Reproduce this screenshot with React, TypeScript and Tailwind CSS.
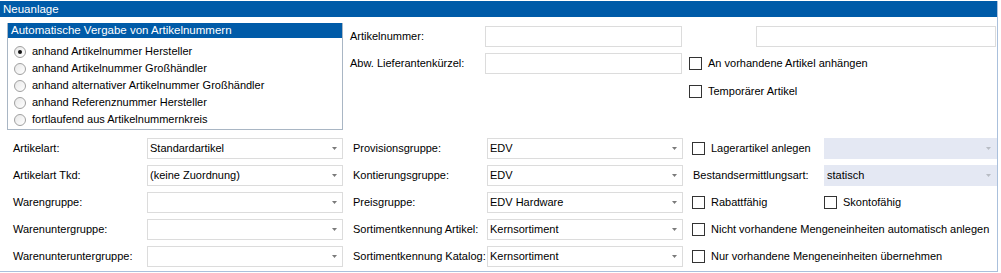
import React from "react";

const font = { fontFamily: '"Liberation Sans", Arial, sans-serif' };

function Combo({ value = "", width, disabled = false }: { value?: string; width: string; disabled?: boolean }) {
  return (
    <div
      className={`${width} h-[21px] flex items-center justify-between border pl-[2px] pr-[5px] ${
        disabled ? "bg-[#e4e8f3] border-[#e4e8f3]" : "bg-white border-[#dcdcdc]"
      }`}
    >
      <span className="leading-none">{value}</span>
      <svg width="5" height="3" viewBox="0 0 5 3">
        <polygon points="0,0 5,0 2.5,3" fill={disabled ? "#b8bcc4" : "#7a7a7a"} />
      </svg>
    </div>
  );
}

function Check({ label, className = "" }: { label: string; className?: string }) {
  return (
    <div className={`flex items-center ${className}`}>
      <div className="w-[13px] h-[13px] border border-[#333] bg-white shrink-0" />
      <span className="ml-[6px] leading-none">{label}</span>
    </div>
  );
}

function Radio({ label, checked = false }: { label: string; checked?: boolean }) {
  return (
    <div className="flex items-center h-[17px]">
      <div className="w-[12px] h-[12px] rounded-full border border-[#a0a0a0] bg-gradient-to-br from-[#e8e8e8] to-white flex items-center justify-center ml-[6px]">
        {checked && <div className="w-[4px] h-[4px] rounded-full bg-[#111]" />}
      </div>
      <span className="ml-[6px] leading-none">{label}</span>
    </div>
  );
}

function Input({ width }: { width: string }) {
  return <div className={`${width} h-[21px] border border-[#dcdcdc] bg-white`} />;
}

export default function App() {
  return (
    <div className="w-[1001px] h-[273px] bg-white text-[11px] text-black" style={font}>
      <div className="w-[998px] h-[271px] border-r border-b border-[#aac0dc]">
        <div className="mt-[1px] h-[16px] bg-[#005ba8] text-white text-[11.5px] leading-[16px] pl-[3px]">Neuanlage</div>

        <div className="flex mt-[6px]">
          <div className="ml-[7px] w-[336px] h-[107px] border border-[#a9b6c4] border-t-0">
            <div className="h-[15px] bg-[#005ba8] text-white text-[11.5px] leading-[15px] pl-[3px]">
              Automatische Vergabe von Artikelnummern
            </div>
            <div className="pt-[5px]">
              <Radio label="anhand Artikelnummer Hersteller" checked />
              <Radio label="anhand Artikelnummer Großhändler" />
              <Radio label="anhand alternativer Artikelnummer Großhändler" />
              <Radio label="anhand Referenznummer Hersteller" />
              <Radio label="fortlaufend aus Artikelnummernkreis" />
            </div>
          </div>

          <div className="ml-[7px] pt-[3px] flex flex-col">
            <div className="flex items-center h-[21px]">
              <span className="w-[135px]">Artikelnummer:</span>
              <Input width="w-[197px]" />
              <Input width="w-[240px] ml-[74px]" />
            </div>
            <div className="flex items-center h-[21px] mt-[6px]">
              <span className="w-[135px]">Abw. Lieferantenkürzel:</span>
              <Input width="w-[197px]" />
              <Check label="An vorhandene Artikel anhängen" className="ml-[7px]" />
            </div>
            <div className="flex items-center h-[20px] mt-[7px]">
              <Check label="Temporärer Artikel" className="ml-[339px]" />
            </div>
          </div>
        </div>

        <div className="flex flex-col gap-[6px] mt-[8px]">
          <div className="flex items-center h-[21px]">
            <span className="w-[147px] pl-[13px]">Artikelart:</span>
            <Combo value="Standardartikel" width="w-[196px]" />
            <span className="w-[144px] pl-[10px]">Provisionsgruppe:</span>
            <Combo value="EDV" width="w-[196px]" />
            <Check label="Lagerartikel anlegen" className="ml-[9px] w-[132px]" />
            <Combo width="w-[173px]" disabled />
          </div>
          <div className="flex items-center h-[21px]">
            <span className="w-[147px] pl-[13px]">Artikelart Tkd:</span>
            <Combo value="(keine Zuordnung)" width="w-[196px]" />
            <span className="w-[144px] pl-[10px]">Kontierungsgruppe:</span>
            <Combo value="EDV" width="w-[196px]" />
            <span className="ml-[10px] w-[131px]">Bestandsermittlungsart:</span>
            <Combo value="statisch" width="w-[173px]" disabled />
          </div>
          <div className="flex items-center h-[21px]">
            <span className="w-[147px] pl-[13px]">Warengruppe:</span>
            <Combo width="w-[196px]" />
            <span className="w-[144px] pl-[10px]">Preisgruppe:</span>
            <Combo value="EDV Hardware" width="w-[196px]" />
            <Check label="Rabattfähig" className="ml-[9px] w-[132px]" />
            <Check label="Skontofähig" />
          </div>
          <div className="flex items-center h-[21px]">
            <span className="w-[147px] pl-[13px]">Warenuntergruppe:</span>
            <Combo width="w-[196px]" />
            <span className="w-[144px] pl-[10px]">Sortimentkennung Artikel:</span>
            <Combo value="Kernsortiment" width="w-[196px]" />
            <Check label="Nicht vorhandene Mengeneinheiten automatisch anlegen" className="ml-[9px]" />
          </div>
          <div className="flex items-center h-[21px]">
            <span className="w-[147px] pl-[13px]">Warenunteruntergruppe:</span>
            <Combo width="w-[196px]" />
            <span className="w-[144px] pl-[10px]">Sortimentkennung Katalog:</span>
            <Combo value="Kernsortiment" width="w-[196px]" />
            <Check label="Nur vorhandene Mengeneinheiten übernehmen" className="ml-[9px]" />
          </div>
        </div>
      </div>
    </div>
  );
}
